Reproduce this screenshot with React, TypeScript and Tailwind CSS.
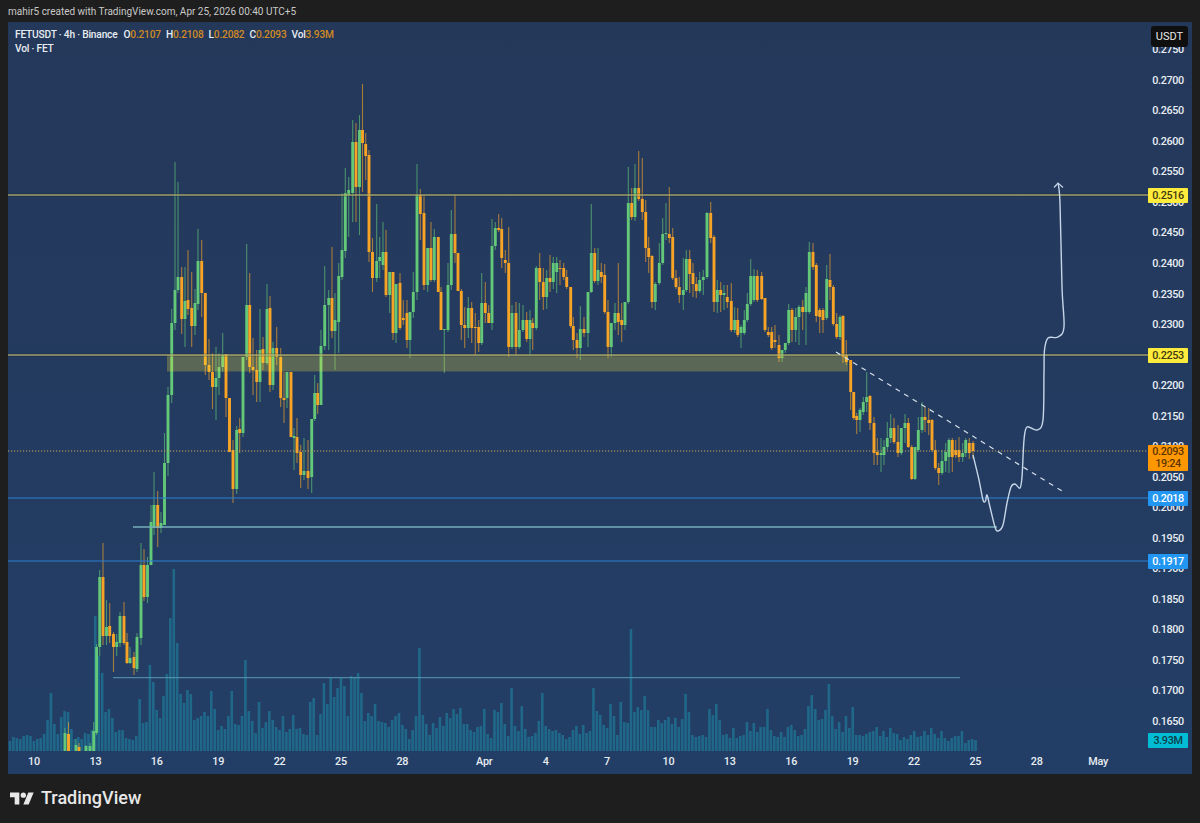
import React from 'react';

// x, open, close, high, low, all in page pixels (smaller y = higher price)
const candles: number[][] = [
  [65,751,733,728,751],[68.5,734,751,722,751],[76,751,745,739,751],[79,747,751,743,751],[86,751,746,745,751],[90,751,746,743,751],
  [93.7,751,731,722,751],[96.6,733,647,644,735],[99.7,647,577,570,656],[103,577,636,543,645],[106.5,636,627,600,645],[109.7,626,636,603,643],
  [113.5,634,647,632,672],[116.7,647,642,634,656],[120,643,616,612,647],[124,616,643,602,645],[127,642,663,633,664],[130,663,658,647,664],
  [134,657,668,652,675],[137,669,637,633,672],[141,638,565,543,645],[144,565,597,549,601],[147.5,597,565,557,603],[151,565,522,505,565],
  [154,528,505,472,535],[157.7,505,528,491,547],[161,528,523,512,533],[164.5,525,463,433,525],[168,463,395,387,476],[171.7,395,323,309,403],
  [175,323,290,162,330],[178,290,277,182,293],[181.7,277,319,267,334],[185,319,301,267,347],[188,300,309,250,315],[191.7,308,326,272,347],
  [195,326,303,289,335],[198,304,261,229,310],[201.7,261,293,240,317],[205.3,293,365,293,375],[209,365,372,339,380],[212.5,372,387,353,409],
  [216,387,378,347,420],[219,378,367,353,395],[222.7,367,355,333,372],[226,354,398,354,417],[229.5,398,452,398,452],[233,450,489,440,503],
  [236.7,489,430,426,494],[239.7,429,433,418,453],[243,433,357,357,437],[246.7,357,305,244,360],[249.7,305,367,273,373],[253,367,370,338,395],
  [256.7,370,382,350,402],[260,382,350,309,402],[263,349,363,337,370],[267,363,309,284,365],[270,308,385,296,392],[273,385,348,342,390],
  [276.7,348,357,327,365],[280.7,357,398,348,407],[284,398,400,372,423],[287,398,372,372,408],[291,372,437,372,437],[294,438,436,428,470],
  [297,437,453,418,463],[300.7,452,475,445,488],[304,475,471,438,480],[308,471,478,440,489],[311.7,477,419,419,493],[314.7,419,393,375,421],
  [317.7,393,405,383,414],[321,405,346,330,405],[324.7,346,305,266,350],[328.7,305,298,290,350],[332,298,331,247,338],[335,331,320,293,370],
  [338.7,322,276,263,353],[342,277,250,193,280],[345.3,251,193,168,258],[348.7,195,190,177,237],[352.7,193,142,120,222],[356,142,187,123,222],
  [359.5,187,130,115,235],[362.5,130,143,84,192],[365.7,144,156,133,180],[369,155,252,150,262],[372.5,252,278,238,292],[376.7,278,261,204,282],
  [379.7,261,257,237,278],[383,265,252,222,270],[386,252,295,230,297],[389.7,295,272,272,313],[393,272,333,272,340],[396,333,284,284,343],
  [400,283,328,273,330],[403.3,318,320,300,325],[407,313,340,300,348],[410,340,312,312,358],[413.3,312,292,272,318],[417,292,195,164,300],
  [420.3,195,214,189,240],[424,213,285,195,290],[427.7,285,248,248,292],[431,248,280,222,282],[434.3,280,237,229,282],[438.3,237,292,237,292],
  [441,292,330,287,330],[444.3,330,329,329,373],[448,330,285,263,332],[451.3,285,234,210,290],[455,234,253,195,263],[458,253,291,253,291],
  [461.3,291,325,289,340],[464.7,325,328,307,348],[468.3,328,308,297,338],[471.7,308,328,302,343],[475.3,327,328,313,355],[478.7,327,343,320,352],
  [481.7,343,303,273,345],[485.3,303,313,282,323],[488.7,313,323,305,323],[492,323,246,219,330],[495.3,246,228,222,250],[498.7,228,230,214,232],
  [501.7,229,258,218,268],[505.3,260,263,250,273],[508.7,263,347,227,357],[512,347,313,305,349],[516,313,347,302,355],[519.3,347,330,303,349],
  [523,330,320,305,332],[526.7,320,339,312,342],[530,339,320,310,355],[532.7,323,328,318,350],[536.3,328,268,266,330],[539.7,268,282,253,300],
  [543.3,282,297,268,310],[546.7,297,278,270,309],[550,278,282,255,292],[553.3,282,263,257,289],[556.7,272,263,257,293],[560,268,269,260,285],
  [563.7,268,277,263,280],[566.7,277,287,270,289],[570.7,287,326,287,328],[573.3,326,340,317,350],[577,340,348,333,358],[580.3,348,329,306,360],
  [584,329,333,317,337],[588,333,292,292,347],[591.3,292,253,204,293],[594.7,253,281,248,283],[598,281,270,248,285],[601.3,272,277,263,283],
  [604.7,275,312,264,314],[608,312,347,300,358],[611.3,347,323,323,357],[615,323,313,303,330],[618.3,313,322,263,335],[621.7,320,325,303,342],
  [625,325,302,302,330],[628.3,302,203,167,304],[631.7,203,217,188,220],[635,217,188,164,221],[638.7,188,199,151,201],[642.3,199,212,158,220],
  [645.7,212,248,200,262],[648.7,248,257,237,273],[652,256,302,255,308],[655.3,302,284,282,310],[659.3,283,263,243,285],[662.7,263,234,218,265],
  [666,234,233,203,240],[669.3,234,238,187,243],[672.7,237,278,228,280],[676,278,287,270,289],[679.3,287,295,277,303],[683.3,295,290,258,310],
  [686.3,290,259,250,292],[689.7,259,274,250,293],[693,273,284,263,297],[696.3,284,291,277,298],[699.7,291,280,272,293],[703.3,280,277,270,295],
  [707,277,213,212,279],[710.7,213,238,202,243],[714,237,302,235,312],[717.3,302,290,280,313],[720.7,290,295,282,312],[724,295,293,285,310],
  [727.3,297,302,285,308],[731.3,301,330,283,332],[734.7,330,320,307,333],[737.7,320,335,308,337],[741,333,327,325,348],[744.3,333,320,310,335],
  [747.3,320,304,293,322],[750.7,304,276,259,306],[754,300,276,269,302],[757.3,276,300,270,302],[761.7,276,299,272,300],[765,298,330,298,332],
  [768.3,332,335,327,337],[771.7,332,348,327,350],[775,340,342,325,348],[779,345,358,335,362],[782,358,350,350,362],[785.3,350,343,343,353],
  [788.7,343,310,304,345],[792,310,330,308,342],[795.7,330,317,308,342],[799,317,307,305,345],[802.7,307,312,300,330],[806,312,293,287,345],
  [809.3,312,252,242,314],[813,252,267,243,270],[816.3,265,316,263,322],[819.7,310,317,308,333],[823,310,320,308,333],[826.7,318,279,265,320],
  [830,280,287,254,300],[833.3,287,324,285,326],[836.7,324,337,313,339],[840,337,317,315,340],[843,316,357,315,363],[846.3,355,362,340,365],
  [850.7,360,392,360,410],[853.7,392,418,392,420],[856.7,416,420,413,434],[860,420,410,408,432],[863.3,412,402,397,415],[866.7,402,397,372,412],
  [870,396,423,395,430],[874,423,453,417,465],[877.3,452,455,438,465],[881,455,453,438,472],[884,455,447,440,465],[887.3,447,438,422,450],
  [890.7,438,428,414,443],[894,428,442,418,444],[898,442,453,425,457],[901.3,453,428,428,455],[905,428,423,414,443],[908.3,423,447,418,448],
  [911.7,447,479,445,480],[915,479,447,447,480],[918.3,450,430,417,452],[922,430,417,402,433],[925,417,420,407,432],[928.7,420,423,408,435],
  [932,420,450,419,452],[935.3,450,468,440,470],[938.7,468,473,463,485],[942,473,461,450,475],[945.7,461,452,443,472],[949,457,440,438,473],
  [952.3,440,457,438,472],[955.7,450,455,440,458],[959,450,457,437,462],[962.7,457,453,443,462],[965.7,453,440,438,457],[969.3,443,453,438,459],
  [973,443,451,441,459],
];

// bar heights above the volume baseline, one bar every 3.412px from x=10
const volumes = [
  10,14,13,12,15,16,15,10,12,13,17,31,58,27,17,34,40,39,22,12,14,12,18,17,21,135,95,78,39,42,33,19,21,21,13,12,11,15,52,28,29,86,69,41,33,55,77,133,182,108,
  57,48,61,57,31,33,35,39,35,60,42,21,25,22,35,60,27,26,35,91,40,30,18,49,23,29,40,31,24,21,35,19,22,36,22,23,17,16,49,53,16,37,68,47,73,54,63,73,65,35,
  75,74,78,58,30,38,35,47,30,29,28,24,31,35,38,
  26,22,12,21,35,103,36,27,16,28,23,34,25,38,33,42,37,43,27,27,21,19,24,25,42,17,13,41,39,48,27,15,63,25,20,45,22,14,15,18,30,58,25,22,20,21,18,16,12,14,
  21,25,17,26,18,20,63,40,36,26,23,47,35,16,49,29,28,122,39,44,41,55,41,24,24,31,28,31,34,27,33,24,32,57,39,16,14,15,16,14,42,36,47,31,16,17,13,23,13,15,
  16,29,20,28,19,24,24,42,21,15,14,19,14,24,26,21,15,16,22,45,56,42,31,32,41,67,35,22,29,19,35,23,44,16,16,15,17,19,20,24,15,20,14,23,18,17,11,
  14,12,16,20,14,15,20,16,23,17,13,20,13,10,13,15,15,20,8,11,12,11,
];

const forecast: number[][] = [
  [973,455],[979,480],[983,500],[985.5,501],[987,495],[990,507],[995,527],[998,531],[1003,525],[1007,503],[1011,487],[1015,484],[1020,488],[1022,477],[1024,440],
  [1027,427],[1037,430],[1043,420],[1044,373],[1044.5,350],[1048,338],[1058,337],[1064,327],[1062,287],[1060,203],[1058,183],
];

const prices = [0.275, 0.27, 0.265, 0.26, 0.255, 0.25, 0.245, 0.24, 0.235, 0.23, 0.225, 0.22, 0.215, 0.21, 0.205, 0.2, 0.195, 0.19, 0.185, 0.18, 0.175, 0.17, 0.165];

const dates = ['10', '13', '16', '19', '22', '25', '28', 'Apr', '4', '7', '10', '13', '16', '19', '22', '25', '28', 'May'];

// catmull-rom through the hand drawn points
function smoothPath(pts: number[][]) {
  let d = `M${pts[0][0]} ${pts[0][1]}`;
  for (let i = 0; i < pts.length - 1; i++) {
    const p0 = pts[i - 1] ?? pts[i];
    const p1 = pts[i];
    const p2 = pts[i + 1];
    const p3 = pts[i + 2] ?? p2;
    const c1x = p1[0] + (p2[0] - p0[0]) / 6;
    const c1y = p1[1] + (p2[1] - p0[1]) / 6;
    const c2x = p2[0] - (p3[0] - p1[0]) / 6;
    const c2y = p2[1] - (p3[1] - p1[1]) / 6;
    d += ` C${c1x} ${c1y} ${c2x} ${c2y} ${p2[0]} ${p2[1]}`;
  }
  return d;
}

function ChartDrawing() {
  return (
    <svg className="block w-[1184px] h-[752px]" viewBox="8 22 1184 752">
      {volumes.map((h, i) => (
        <rect key={i} x={10 + i * 3.412 - 1.3} y={751 - h} width={2.6} height={h} fill="#20708f" fillOpacity={0.85} />
      ))}

      {candles.map(([x, o, c, hi, lo], i) => {
        const up = c < o;
        const color = up ? '#63c878' : '#f7a426';
        const top = Math.min(o, c);
        return (
          <g key={i}>
            <line x1={x} x2={x} y1={hi} y2={lo} stroke={color} strokeWidth={1.1} strokeOpacity={0.62} />
            <rect x={x - 1.45} y={top} width={2.9} height={Math.max(Math.abs(o - c), 1)} fill={color} />
          </g>
        );
      })}

      <rect x={167} y={355} width={681} height={16.5} fill="#ffeb3b" fillOpacity={0.25} />

      <line x1={8} x2={1148} y1={195} y2={195} stroke="#121c2c" strokeWidth={3} strokeOpacity={0.35} />
      <line x1={8} x2={1148} y1={355} y2={355} stroke="#121c2c" strokeWidth={3} strokeOpacity={0.35} />
      <line x1={8} x2={1148} y1={195} y2={195} stroke="#e2d87c" strokeWidth={1.1} />
      <line x1={8} x2={1148} y1={355} y2={355} stroke="#e2d87c" strokeWidth={1.1} />
      <line x1={8} x2={1148} y1={451} y2={451} stroke="#c9a45f" strokeWidth={1} strokeDasharray="1.2 1.8" />
      <line x1={8} x2={1148} y1={498} y2={498} stroke="#2a80d4" strokeWidth={1.1} />
      <line x1={8} x2={1148} y1={561} y2={561} stroke="#2a80d4" strokeWidth={1.1} />
      <line x1={133} x2={997} y1={527} y2={527} stroke="#76aeb8" strokeWidth={1.3} />
      <line x1={113} x2={960} y1={677.7} y2={677.7} stroke="#5a9bb0" strokeWidth={1} />
      <line x1={836} x2={1062} y1={352} y2={491} stroke="#d5dfe8" strokeWidth={1.2} strokeDasharray="5 5" />

      <path d={smoothPath(forecast)} fill="none" stroke="#c6d6e8" strokeWidth={1.4} />
      <path d="M1054 187.5 L1058 183 L1063 187.5" fill="none" stroke="#c6d6e8" strokeWidth={1.2} />
    </svg>
  );
}

function PriceTag({ y, className, children }: { y: number; className: string; children: React.ReactNode }) {
  return (
    <div className={`absolute left-[1140px] w-[40px] h-[15px] leading-[15px] text-center rounded-[1px] ${className}`} style={{ top: y - 22 - 7.5 }}>
      {children}
    </div>
  );
}

function Legend() {
  return (
    <div className="absolute left-[7px] top-[6px] text-[10.2px] leading-[14px] text-[#e8edf2] font-medium tracking-[-0.2px]">
      <div className="flex gap-[5px] whitespace-nowrap">
        <span className="mr-[1px]">FETUSDT · 4h · Binance</span>
        <span>O<span className="text-[#d08a24]">0.2107</span></span>
        <span>H<span className="text-[#d08a24]">0.2108</span></span>
        <span>L<span className="text-[#d08a24]">0.2082</span></span>
        <span>C<span className="text-[#d08a24]">0.2093</span></span>
        <span>Vol<span className="text-[#d08a24]">3.93M</span></span>
      </div>
      <div>Vol · FET</div>
    </div>
  );
}

export default function App() {
  return (
    <div className="w-[1200px] h-[823px] overflow-hidden flex flex-col bg-[#1e1e1e] font-['Roboto',sans-serif]">
      <div className="h-[22px] pl-2 pt-[4px] text-[10px] leading-[16px] text-[#c9c9c9]">
        mahir5 created with TradingView.com, Apr 25, 2026 00:40 UTC+5
      </div>

      <div className="relative mx-2 h-[752px] overflow-hidden bg-gradient-to-b from-[#24385a] to-[#233e66]">
        <ChartDrawing />
        <Legend />

        {/* price axis, one tick every 0.0050 */}
        <div className="absolute left-[1140px] top-[13.24px] w-[40px] flex flex-col text-[10.8px] font-medium text-[#e8edf2] tracking-[-0.35px]">
          {prices.map((p) => (
            <span key={p} className="h-[30.52px] flex items-center justify-center">
              {p.toFixed(4)}
            </span>
          ))}
        </div>

        {/* time axis, ticks every 3 days; the 4 day gap sits before Apr */}
        <div className="absolute left-[-4.7px] top-[734px] flex text-[10.8px] leading-[12px] font-medium text-[#e8edf2] tracking-[-0.2px]">
          {dates.map((label, i) => (
            <span key={i} className={label === 'Apr' ? 'w-[61.4px] ml-[20.5px] text-center' : 'w-[61.4px] text-center'}>
              {label}
            </span>
          ))}
        </div>

        <div className="text-[10.8px] font-medium tracking-[-0.35px]">
          <PriceTag y={195} className="bg-[#ffeb3b] text-[#3f3a10]">0.2516</PriceTag>
          <PriceTag y={355} className="bg-[#ffeb3b] text-[#3f3a10]">0.2253</PriceTag>
          <PriceTag y={498} className="bg-[#2196f3] text-white">0.2018</PriceTag>
          <PriceTag y={561} className="bg-[#2196f3] text-white">0.1917</PriceTag>
          <PriceTag y={740.5} className="bg-[#00bcd4] text-[#0d3f4a]">3.93M</PriceTag>
          <div className="absolute left-[1140px] top-[423px] w-[40px] h-[26px] pt-[1px] leading-[12px] text-center rounded-[1px] bg-[#ff9800] text-[#5e3500]">
            <div>0.2093</div>
            <div>19:24</div>
          </div>
        </div>

        <div className="absolute left-[1143px] top-[4px] w-[37px] h-[21px] rounded-[3px] bg-[#0f0f0f] text-[#e8e8e8] text-[11px] leading-[21px] text-center">
          USDT
        </div>
      </div>

      <div className="flex-1 pl-[10px] flex items-center gap-[7px] pb-[1px]">
        <svg className="w-[24px] h-[13px]" viewBox="0 4 36 18">
          <path d="M14 22H7V11H0V4h14v18zM28 22h-8l7.5-18h8L28 22z" fill="#e8e8e8" />
          <circle cx="20" cy="8" r="4" fill="#e8e8e8" />
        </svg>
        <span className="text-[18px] font-medium leading-[20px] text-[#e8e8e8]">TradingView</span>
      </div>
    </div>
  );
}
